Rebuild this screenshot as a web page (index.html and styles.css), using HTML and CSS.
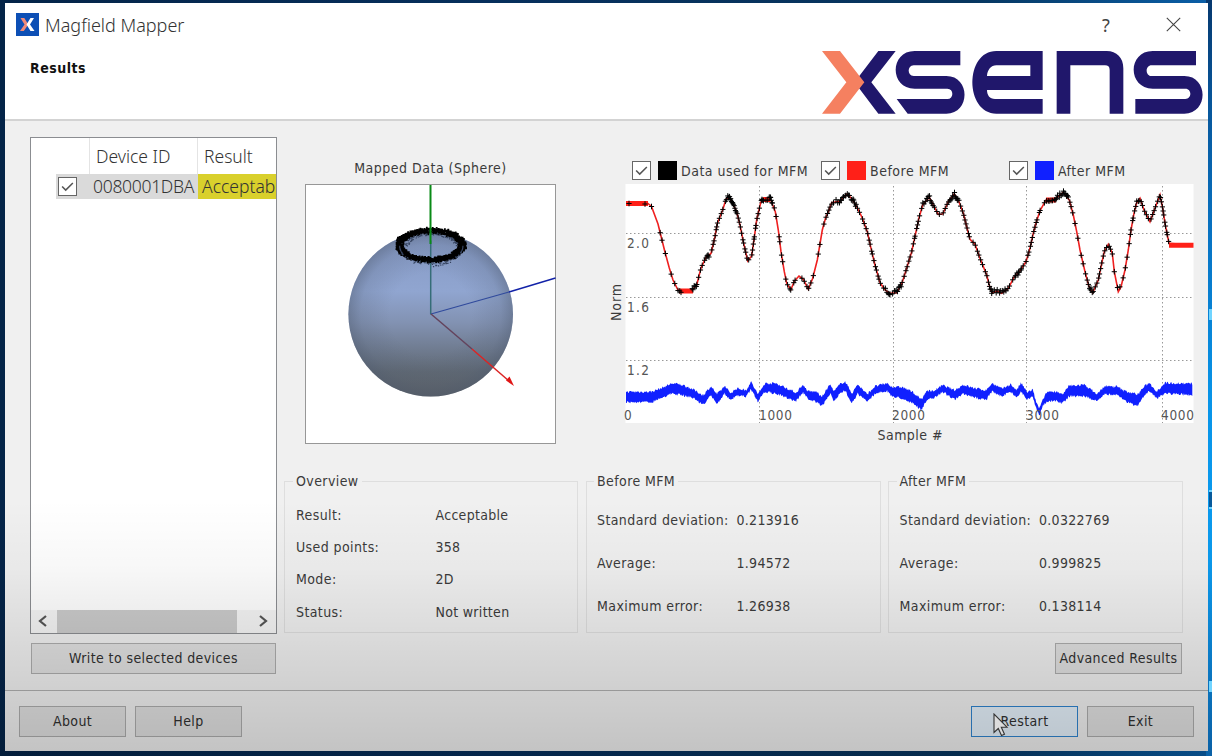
FILE: index.html
```html
<!DOCTYPE html>
<html lang="en">
<head>
<meta charset="utf-8">
<title>Magfield Mapper</title>
<link rel="stylesheet" href="styles.css">
</head>
<body>
<div class="window">
  <header class="header">
    <div class="titlebar">
      <svg class="app-icon" width="23" height="23" viewBox="0 0 23 23"><rect width="23" height="23" fill="#0d4fb5"/><path d="M4.500 5h3.800l4 6.500-4.500 6.500H4l4.500-6.500z" fill="#f08a78"/><path d="M14.500 5H18l-4 6.500 4.500 6.500h-4l-4-6.500z" fill="#fff"/></svg>
      <span class="app-title">Magfield Mapper</span>
      <span class="help">?</span>
      <svg class="close" width="15" height="15" viewBox="0 0 15 15"><path d="M.8.8l13.400 13.400M14.200.8L.8 14.200" stroke="#444" stroke-width="1.100"/></svg>
    </div>
    <div class="subheader">
      <h1 class="page-title">Results</h1>
      <svg class="logo" width="381" height="63" viewBox="67 153 1143 189">
        <g fill="#20176b">
          <path d="M236 153h52l-73 94 73 94h-52l-60-79v-30z"/>
          <path d="M482 153v43H342c-20 0-20 32 0 32h98c73 0 73 113 0 113H324l-33-44h152c20 0 20-31 0-31h-98c-76 0-76-113 0-113z"/>
          <path fill-rule="evenodd" d="M729 153v117H562c0 15 8 27 24 27h143v44H590c-96 0-96-188 0-188zM692 196H590c-16 0-27 14-28 32h130z"/>
          <path d="M771 341V153h150c30 0 50 20 50 52v136h-41V210c0-10-5-14-14-14H812v145z"/>
          <path d="M1189 153v43h-133c-20 0-20 32 0 32h98c73 0 73 113 0 113h-147v-44h150c20 0 20-31 0-31h-98c-76 0-76-113 0-113z"/>
        </g>
        <path d="M67 153h54l73 94-73 94H67l73-94z" fill="#f58060"/>
      </svg>
    </div>
  </header>

  <main class="main">
    <section class="devices">
      <div class="device-list">
        <div class="row head"><span></span><span class="cell">Device ID</span><span class="cell">Result</span></div>
        <div class="row item"><span class="check-cell"><svg class="check" viewBox="0 0 19 19"><path d="M3.500 9.500l4 4 8-8"/></svg></span><span class="id">0080001DBA</span><span class="status">Acceptab</span></div>
        <div class="scrollbar">
          <svg width="26" height="22" viewBox="0 0 26 22"><path d="M15 6l-6 5 6 5"/></svg>
          <span class="thumb"></span>
          <svg width="26" height="22" viewBox="0 0 26 22"><path d="M10 6l6 5-6 5"/></svg>
        </div>
      </div>
      <button class="btn write">Write to selected devices</button>
    </section>

    <section class="results">
      <div class="charts">
        <figure class="sphere">
          <figcaption>Mapped Data (Sphere)</figcaption>
          <svg id="sphere" width="251" height="260" viewBox="305 183.500 251 260">
            <defs>
              <linearGradient id="ball" x1="0" y1="0" x2="0" y2="1"><stop offset="0" stop-color="#8599c4"/><stop offset=".36" stop-color="#90a5d0"/><stop offset=".55" stop-color="#8292b2"/><stop offset=".85" stop-color="#606974"/><stop offset="1" stop-color="#5c6167"/></linearGradient>
              <radialGradient id="rim"><stop offset=".5" stop-color="#4c586c" stop-opacity="0"/><stop offset=".85" stop-color="#4c586c" stop-opacity=".18"/><stop offset="1" stop-color="#4c586c" stop-opacity=".45"/></radialGradient>
            </defs>
            <rect x="305.500" y="184" width="250" height="259" fill="#fff" stroke="#979797"/>
            <circle cx="430.700" cy="313.800" r="82.300" fill="url(#ball)"/>
            <circle cx="430.700" cy="313.800" r="82.300" fill="url(#rim)"/>
            <path d="M430.700 240v74" stroke="#356d77" stroke-width="1.500"/>
            <path d="M431 313.500l78-22" stroke="#304a9c" stroke-width="1.200"/>
            <path d="M509 291.500l46.500-14" stroke="#1222a8" stroke-width="1.400"/>
            <path d="M431 313.500l41 35" stroke="#64435c" stroke-width="1.500"/>
            <path d="M472 348.500l37 32" stroke="#dc2424" stroke-width="1.500"/>
            <path d="M506 380l3.500-4 4.500 9.500z" fill="#e01515"/>
            <path id="ring" fill="#000"/>
            <path id="ring-faint" fill="#35435f"/>
            <path d="M430.500 184.500v59" stroke="#098a16" stroke-width="2"/>
          </svg>
        </figure>
        <figure class="norm">
          <div class="legend">
            <div class="series"><svg class="check" viewBox="0 0 19 19"><path d="M3.500 9.500l4 4 8-8"/></svg><i class="swatch black"></i><span>Data used for MFM</span></div>
            <div class="series"><svg class="check" viewBox="0 0 19 19"><path d="M3.500 9.500l4 4 8-8"/></svg><i class="swatch red"></i><span>Before MFM</span></div>
            <div class="series"><svg class="check" viewBox="0 0 19 19"><path d="M3.500 9.500l4 4 8-8"/></svg><i class="swatch blue"></i><span>After MFM</span></div>
          </div>
          <svg class="plot" width="591" height="262" viewBox="603 184 591 262">
            <rect x="625.500" y="184" width="568" height="239" fill="#fff"/>
            <path class="grid" d="M626 233.500h567M626 297.500h567M626 360.500h567M759.500 186v237M893.500 186v237M1026.500 186v237M1162.500 186v237"/>
            <path id="after" fill="#1020ff"/>
            <g class="ticks">
              <text x="627" y="248" textLength="22">2.0</text><text x="627" y="312" textLength="22">1.6</text><text x="627" y="375" textLength="22">1.2</text>
              <text x="624" y="419.500">0</text><text x="759" y="419.500" textLength="33">1000</text><text x="892" y="419.500" textLength="33">2000</text><text x="1026" y="419.500" textLength="33">3000</text><text x="1161" y="419.500" textLength="33">4000</text>
            </g>
            <path id="before" fill="none" stroke="#ef2020" stroke-width="1.600"/>
            <path id="flat" fill="none" stroke="#ff2018" stroke-width="5" d="M626 203.500h22M679 291h14M763 199.500h7M1046 200h10M1169 245.200h24.500"/>
            <path id="used" fill="none" stroke="#000" stroke-width="1"/>
            <text class="axis" transform="translate(621 321) rotate(-90)" textLength="37">Norm</text>
            <text class="axis" x="877.500" y="439.500" textLength="65">Sample #</text>
          </svg>
        </figure>
      </div>

      <div class="groups">
        <fieldset class="group overview"><legend>Overview</legend>
          <dl><dt>Result:</dt><dd>Acceptable</dd><dt>Used points:</dt><dd>358</dd><dt>Mode:</dt><dd>2D</dd><dt>Status:</dt><dd>Not written</dd></dl>
        </fieldset>
        <fieldset class="group stats"><legend>Before MFM</legend>
          <dl><dt>Standard deviation:</dt><dd>0.213916</dd><dt>Average:</dt><dd>1.94572</dd><dt>Maximum error:</dt><dd>1.26938</dd></dl>
        </fieldset>
        <fieldset class="group stats"><legend>After MFM</legend>
          <dl><dt>Standard deviation:</dt><dd>0.0322769</dd><dt>Average:</dt><dd>0.999825</dd><dt>Maximum error:</dt><dd>0.138114</dd></dl>
        </fieldset>
      </div>
      <button class="btn advanced">Advanced Results</button>
    </section>
  </main>

  <footer class="footer">
    <button class="btn">About</button>
    <button class="btn">Help</button>
    <button class="btn primary">Restart</button>
    <button class="btn">Exit</button>
  </footer>
</div>
<div class="shade"></div>
<svg class="cursor" width="16" height="24" viewBox="0 0 16 24"><path d="M1 1v18.500l4.300-4 3.200 7 3-1.300-3.200-7H14z" fill="#dcdcdc" stroke="#333" stroke-width="1.100"/></svg>
<i class="glint g1"></i><i class="glint g2"></i><i class="glint g3"></i>
<script src="charts.js"></script>
</body>
</html>
```
FILE: styles.css
```css
* { box-sizing: border-box; }
body {
  margin: 0; width: 1212px; height: 756px; overflow: hidden; position: relative;
  padding: 3px 4px 5px 5px;
  font: 14px/18px "DejaVu Sans Condensed", "DejaVu Sans", "Noto Sans", sans-serif;
  font-stretch: condensed;
  letter-spacing: .4px;
  color: #3b3b3b;
  background:
    linear-gradient(#06386e, #085396 90px, #0874c4 240px, #0894e8 400px, #0b9cf0 560px, #0c77cc 756px) right 0 top 0 / 6px 100% no-repeat,
    linear-gradient(90deg, #042448, #062f5c 40%, #07365f 80%, #0a5fa8) ;
}
.window { display: flex; flex-direction: column; width: 1203px; height: 748px; background: #f0f0f0; }
.header { height: 118px; background: #fff; border-bottom: 2px solid #d3d3d3; }
.titlebar { display: flex; align-items: center; height: 43px; padding: 0 27px 0 11px; }
.app-title { margin-left: 6px; flex: 1; font: 18px/24px "Noto Sans", sans-serif; font-weight: 300; color: #333; letter-spacing: 0; }
.help { font: 18px/24px "Noto Sans", sans-serif; color: #444; width: 12px; margin-right: 52px; }
.subheader { display: flex; justify-content: space-between; padding: 5px 5px 0 25px; }
.page-title { margin: 8px 0 0; font: bold 14px/18px "DejaVu Sans Condensed", "DejaVu Sans", sans-serif; font-stretch: condensed; letter-spacing: .5px; color: #111; }

.main { display: flex; height: 570px; padding: 16px 0 0 25px; border-bottom: 1px solid #b0b0b0; }
.devices { width: 247px; }
.device-list { display: flex; flex-direction: column; height: 497px; border: 1px solid #8b8d91; background: #fff; overflow: hidden; }
.row { display: grid; grid-template-columns: 58px 108px 79px; font: 17.500px/26px "Noto Sans", sans-serif; font-weight: 300; letter-spacing: 0; color: #333; white-space: nowrap; }
.head { height: 36px; padding-top: 5px; }
.cell { border-left: 1px solid #e4e4e4; padding-left: 6px; margin-top: -5px; padding-top: 5px; }
.item { height: 25px; line-height: 25px; margin-left: 25px; grid-template-columns: 33px 109px 78px; background: #dadada; }
.check { width: 19px; height: 19px; background: #fff; border: 1px solid #666; display: block; flex: none; }
.check path { fill: none; stroke: #555; stroke-width: 1.700; }
.check-cell { padding: 3px 0 0 2px; }
.id { padding-left: 4px; letter-spacing: -.3px; }
.status { background: #d9d02c; padding-left: 4px; }
.scrollbar { margin-top: auto; height: 23px; display: flex; background: #f5f5f5; }
.scrollbar path { fill: none; stroke: #555; stroke-width: 2.200; }
.thumb { width: 180px; background: #cbcbcb; }
.scrollbar svg:last-child { margin-left: auto; }
.btn { font: inherit; letter-spacing: .4px; color: #303030; height: 31px; width: 107px; padding: 0 0 1px; border: 1px solid #adadad; background: #e1e1e1; white-space: nowrap; }
.write { display: block; width: 245px; margin: 9px 0 0 1px; }

.results { width: 906px; margin-left: 7px; display: flex; flex-direction: column; }
.charts { display: flex; height: 344px; }
figure { margin: 0; }
.sphere { width: 251px; margin: 22px 0 0 21px; }
.sphere figcaption { text-align: center; height: 24.500px; letter-spacing: .5px; }
.sphere svg, .plot { display: block; }
.norm { margin: 24px 0 0 47px; }
.legend { display: grid; grid-template-columns: 189px 188px 180px; padding-left: 29px; height: 23px; }
.series { display: flex; height: 19px; align-items: center; white-space: nowrap; letter-spacing: .5px; }
.swatch { width: 19px; height: 19px; margin: 0 4px 0 7px; flex: none; }
.black { background: #000; } .red { background: #ff2018; } .blue { background: #1020ff; }
.grid { stroke: #999; stroke-width: 1; stroke-dasharray: 1.500 2.500; fill: none; }
.ticks { font-size: 13.500px; letter-spacing: 0; fill: #555; }
.axis { font-size: 14px; letter-spacing: 0; fill: #3b3b3b; }

.groups { display: grid; grid-template-columns: 294px 295px 295px; column-gap: 7.500px; height: 153px; }
.group { min-width: 0; height: 161px; margin: -9px 0 0; padding: 0; border: 1px solid #dedede; }
.group legend { margin-left: 8px; padding: 0 3px; height: 18px; }
.stats legend { margin-left: 7.500px; }
dl { display: grid; margin: 0; padding-left: 11px; grid-template-columns: 139.500px 1fr; grid-auto-rows: 32.200px; padding-top: 16px; white-space: nowrap; }
.stats dl { padding-left: 10.500px; grid-auto-rows: 43px; padding-top: 21px; }
dd { margin: 0; letter-spacing: .3px; }
.advanced { width: 127px; margin: 9px 8px 0 auto; }

.footer { display: flex; padding: 15px 14px 0 14px; gap: 9px; }
.primary { margin-left: auto; border: 1px solid #2f84cf; background: #e5f1fb; }
.shade { position: absolute; inset: 500px 0 0 0; pointer-events: none; background: linear-gradient(transparent, rgba(0,0,0,.03) 70px, rgba(0,0,0,.1) 150px, rgba(0,0,0,.19)); }
.cursor { position: absolute; left: 993px; top: 713px; }
.glint { position: absolute; right: 0; width: 3px; height: 11px; background: #70d4ff; }
.g1 { top: 309px; } .g2 { top: 490px; height: 19px; background: #075a9c; border: solid #70d4ff; border-width: 2px 0; } .g3 { top: 681px; }
```
FILE: charts.js
```js
let seed = 7;
const rnd = () => (seed = (seed * 16807) % 2147483647) / 2147483647;
const pairs = s => s.trim().split(/\s+/).map(p => p.split(',').map(Number));

const before = pairs(`626,203.5 648,203.5 651.5,206.5 658,224 664.7,251 669.3,268 673,280 677.7,289.5 681.7,292.5 691.7,290.5
696.7,285 701,268 706,257.3 711,253.5 715,236.7 717.3,223.5 722.5,210.6 726,199.3 729.3,196.7 732.6,203.3 736.7,211.7 740,225
743.3,241.7 747.7,261 751.7,256 754.3,237.3 756.7,220 760.7,202.7 763.3,199.3 770,198.3 772.7,205 775.3,211.7 778.3,230
781,251.7 784.3,271.7 786.7,283.3 790.7,290 794.5,281 799,276 803.3,279.3 808.3,289.3 812.7,278.3 817.3,260 822.3,230
825.3,219 828.3,211.7 831.7,202.7 840,201 846.7,194.3 851.7,198.3 856.7,206.7 861.7,216.7 867.3,231.7 871,248.3 875,265
880,282.7 885,290 890,293.3 896.7,292.7 901.7,284 906.7,268.3 911.7,251.7 916,231.7 919.3,216.7 922.7,205 929.3,197.3
933.3,205 938.3,214.3 942.7,214 948.3,201.7 954.3,194 959.3,202.7 963.3,213.3 966.7,226.7 970,239.3 975,244.3 980,258.3
986.7,275 990,288.3 992.3,293 997,291 1001.7,293.3 1008.3,288.3 1014,277.3 1020,270.7 1026,261.7 1030,248.3 1033.3,233.3
1036.7,220.7 1040,210.7 1046,200 1055,199 1063.3,192.3 1069.3,200 1073.3,215 1076.7,231.7 1080,250 1085,271.7 1089,286.7
1092.7,292.7 1098.3,280 1101.7,263.3 1104.3,251.7 1108.3,244.3 1112.3,253.3 1114.3,271.7 1118.3,291.7 1121,287 1125,270
1128.3,250 1131,230 1134,213.3 1136.7,202.7 1140,198.3 1144,210 1150,221.7 1155,208.3 1160,195 1162.7,208.3 1165.3,225
1169,243.3 1193,245.3`);
document.getElementById('before').setAttribute('d', 'M' + before.map(p => p.join(' ')).join('L'));

let used = '';
const plus = (x, y) => { used += `M${x - 2.6} ${y}h5.2M${x} ${y - 2.8}v5.6`; };
plus(629, 203.5); plus(645, 204);
const sparse = (x) => x < 676 || (x > 771 && x < 785) || (x > 811 && x < 823) || (x > 1073 && x < 1083) || (x > 1109 && x < 1129);
for (let i = 1; i < before.length - 1; i++) {
  const [x0, y0] = before[i], [x1, y1] = before[i + 1];
  if (x0 < 650 || x0 > 1168 || (x0 > 679 && x0 < 690)) continue;
  const len = Math.hypot(x1 - x0, y1 - y0);
  const extreme = Math.abs(y1 - y0) < 9 && (y0 < 206 || y0 > 284);
  const n = Math.max(1, Math.round(len / (sparse(x0) ? 13 : extreme ? 1.6 : 5.2)));
  for (let k = 0; k < n; k++) {
    const t = (k + rnd() * .7) / n;
    plus(x0 + (x1 - x0) * t, y0 + (y1 - y0) * t + (extreme ? rnd() * 4 - 2.2 : 0));
  }
}
[[707, 256], [709, 257], [706, 258], [708, 255], [1015, 277], [1017, 273], [1019, 272], [1021, 270], [1018, 275]].forEach(p => plus(...p));
document.getElementById('used').setAttribute('d', used);

const after = pairs(`626,397,4.5 651,397,4.5 661,393,4 672,388.5,4.5 682,390,4.5 692,393,3.5 703,400,4 711,391,4 717,399,4 725,389.5,3
730,397,3 737,392,3 746,393.5,2.5 751,385.5,3 758,398,3 765,387.5,3.5 776,388.5,4.5 787,393,4 796,397,3.5 802.7,388.5,3 808,395,3
817,397,4.5 821.7,402,4 830,389,4 834,396,4 840,389,4 845,386,4 852,398,4 857.7,389,4 867,398,3 875,390,3 886.7,387,3
891.7,391.5,4 903,393,5 913,398,5 921.7,405,4.5 926.7,395,4 933,395,3 942.7,388.5,2.5 955,395,4 963,389.5,4 973,392.5,4
986,395,4 992,387.5,3.5 1001.7,392.5,3 1010.7,388,3 1016.7,394,3 1021,387,3.5 1027,396,3 1032.7,393,2.5 1036.7,407,2.5
1039.3,412,3 1042.7,403,2 1047,396.5,4 1056.7,396,4 1062.7,399,3.5 1069,391,4.5 1085,390.5,5 1097,398,3 1105,389.5,3
1111.7,391,3.5 1116.7,390,3 1123,395,4 1133,399,5 1138,400,5 1143,392.5,4 1149,386.5,3 1156.7,395,3 1165,388,4.5 1194,389.5,5`);
const top_ = [], bottom = [];
for (let x = 626, i = 0; x <= 1193; x += .7) {
  while (after[i + 1][0] < x) i++;
  const [x0, y0, h0] = after[i], [x1, y1, h1] = after[i + 1], t = (x - x0) / (x1 - x0);
  const y = y0 + (y1 - y0) * t, h = h0 + (h1 - h0) * t;
  top_.push(`${x.toFixed(1)} ${(y - h - rnd() * 2.6 + .6).toFixed(1)}`);
  bottom.unshift(`${x.toFixed(1)} ${(y + h + rnd() * 2.6 - .6).toFixed(1)}`);
}
document.getElementById('after').setAttribute('d', 'M' + top_.concat(bottom).join('L') + 'z');

let ring = '', faint = '';
for (let i = 0; i < 1500; i++) {
  const a = rnd() * Math.PI * 2, r = 1 + (rnd() + rnd() - 1) * .14;
  const x = 429.8 + Math.cos(a) * 31.5 * r, y = 244 + Math.sin(a) * 14.5 * r + (rnd() - .5) * 4;
  ring += `M${x.toFixed(1)} ${y.toFixed(1)}h1.8v1.8h-1.8z`;
}
for (let i = 0; i < 170; i++) {
  const a = rnd() * Math.PI * 2, s = Math.sin(a), r = s > 0 ? 1.1 + rnd() * .28 : .72 + rnd() * .15;
  faint += `M${(430.7 + Math.cos(a) * 31 * (s > 0 ? 1.02 : r)).toFixed(1)} ${(245 + s * 15 * r).toFixed(1)}h1.2v1.2h-1.2z`;
}
document.getElementById('ring').setAttribute('d', ring);
document.getElementById('ring-faint').setAttribute('d', faint);
```
